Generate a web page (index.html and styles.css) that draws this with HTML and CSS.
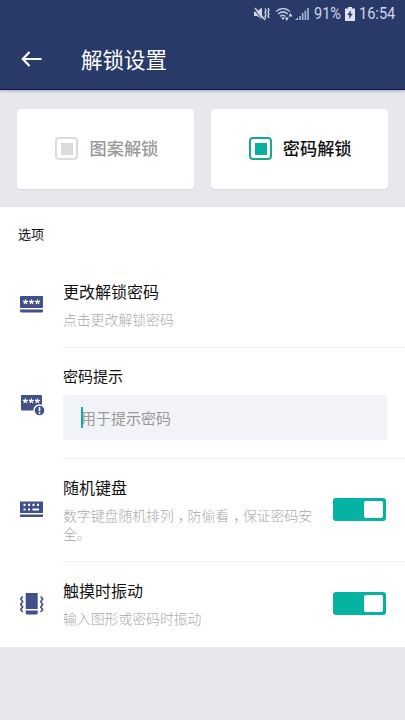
FILE: index.html
```html
<!DOCTYPE html>
<html lang="zh-CN">
<head>
<meta charset="utf-8">
<title>解锁设置</title>
<link rel="stylesheet" href="styles.css">
</head>
<body>
<header class="header">
  <div class="status">
    <svg class="mute" width="16" height="14" viewBox="0 0 16 14"><path d="M0 4.500h3L8 0.500v12L3 9H0z" fill="#ced5e6"/><path d="M0 2.500l9 11" stroke="#293a68" stroke-width="1"/><path d="M1 1l10 12" stroke="#ced5e6" stroke-width="1.400"/><path d="M11 1.500l1 2-1 2 1 2-1 2 1 2M14 1l1 2-1 2 1 2-1 2 1 2" fill="none" stroke="#ced5e6" stroke-width="1.400"/></svg>
    <svg class="wifi" width="18" height="15" viewBox="0 0 18 15"><g fill="none" stroke="#b9c7df" stroke-width="1.500"><path d="M1 4.500Q8 -1.600 15 4.500M3 7Q8 2.700 13 7M5.200 9.500Q8 7 10.500 9.500"/></g><path d="M6.500 11L8 9.800l1.500 1.200L8 13z" fill="#ced5e6"/><path d="M9.800 10.500h4L11.800 14zM13.500 9.500h4l-2-3.500z" fill="#ced5e6"/></svg>
    <svg class="signal" width="14" height="14" viewBox="0 0 14 14"><path d="M0 13l3-2.500V13z" fill="#b9c7df"/><path d="M5 13V9M7.700 13V6M10.400 13V3.500M13 13V1" stroke="#a4b4d2" stroke-width="1.700"/></svg>
    <span class="percent">91%</span>
    <svg class="battery" width="10" height="14" viewBox="0 0 10 14"><path d="M3 0h4v1.500h3V14H0V1.500h3z" fill="#dce2ef"/><path d="M6 3L2.200 8h2.200L4 12l3.800-5.200H5.500z" fill="#293a68"/></svg>
    <span class="clock">16:54</span>
  </div>
  <div class="toolbar">
    <svg class="back" width="21" height="16" viewBox="0 0 21 16"><path d="M8.500 1L1.800 8l6.700 7M2 8h18.500" fill="none" stroke="#fff" stroke-width="2.200"/></svg>
    <h1>解锁设置</h1>
  </div>
</header>
<section class="modes">
  <div class="card"><i class="box"></i><span>图案解锁</span></div>
  <div class="card active"><i class="box"></i><span>密码解锁</span></div>
</section>
<main class="options">
  <h2>选项</h2>
  <div class="row change">
    <div class="icon"><svg width="24" height="17" viewBox="0.5 0 24 17"><rect x=".5" width="23" height="12" rx="1" fill="#40508a"/><path d="M.5 13.500h23V15q0 1.500-1.500 1.500H2Q.5 16.500.5 15z" fill="#40508a"/><g id="stars" stroke="#fff" stroke-width="1.300"><path id="star" d="M6 3.400V6M3.500 5.200L6 6l2.500-.8M4.500 8.200L6 6l1.500 2.200"/><use href="#star" x="6"/><use href="#star" x="12"/></g></svg></div>
    <div class="body"><h3>更改解锁密码</h3><p>点击更改解锁密码</p></div>
  </div>
  <div class="row hint">
    <div class="icon"><svg width="25" height="22" viewBox="0 0 25 22"><rect x="1" y="1" width="21" height="15.500" rx="1" fill="#40508a"/><use href="#stars" x="-.7" y="1"/><circle cx="19.500" cy="16.500" r="5.500" fill="#40508a" stroke="#fff" stroke-width="1.400"/><path d="M19.500 13v4.200M19.500 18.300v1.600" stroke="#fff" stroke-width="1.600"/></svg></div>
    <div class="body"><h3>密码提示</h3><div class="field"><i class="caret"></i><span>用于提示密码</span></div></div>
  </div>
  <div class="row random">
    <div class="icon"><svg width="24" height="17" viewBox="0.5 0 24 17"><path d="M.5.500h23V12H.5zM.5 13.500h23V15q0 1-1 1h-21q-1 0-1-1z" fill="#40508a"/><path d="M4 3.800h2M8.500 3.800h2M13 3.800h2M17.500 3.800h2M4 8.500h2M8.500 8.500h2M13 8.500h6.500" stroke="#fff" stroke-width="2.200"/></svg></div>
    <div class="body"><h3>随机键盘</h3><p>数字键盘随机排列<span class="comma">，</span>防偷看<span class="comma">，</span>保证密码安全。</p></div>
    <div class="switch"><i></i></div>
  </div>
  <div class="row vibrate">
    <div class="icon"><svg width="24" height="22" viewBox="0.3 0 24 22"><path d="M6 0h12v16H6zM6 17.500h12V20q0 1.500-1.500 1.500h-9Q6 21.500 6 20z" fill="#40508a"/><path d="M3 3.500L1 6l2 2.500L1 11.500l2 2.500-2 2.500L3 19M21 3.500L23 6l-2 2.500 2 3-2 2.500 2 2.500-2 2.500" fill="none" stroke="#40508a" stroke-width="1.600"/></svg></div>
    <div class="body"><h3>触摸时振动</h3><p>输入图形或密码时振动</p></div>
    <div class="switch"><i></i></div>
  </div>
</main>
</body>
</html>
```
FILE: styles.css
```css
* { box-sizing: border-box; }
body { margin: 0; height: 720px; overflow: hidden; background: #e7e8ed; font-family: "Noto Sans CJK SC", sans-serif; color: #111; }
h1, h2, h3, p { margin: 0; font-weight: 400; }
svg { display: block; flex: none; }
.header { height: 90px; background: #293a68; border-bottom: 1px solid #0c1556; box-shadow: 0 1px 3px rgba(40, 50, 110, .35); }
.status { display: flex; align-items: center; height: 28px; padding-left: 254px; font: 16px/28px Roboto, sans-serif; color: #ced5e6; }
.wifi { margin-left: 5px; }
.signal { margin-left: 2px; }
.percent { width: 28px; margin-left: 5px; white-space: nowrap; font-size: 16px; }
.percent, .clock { display: block; transform: scaleX(.91); transform-origin: left; }
.battery { margin-left: 3px; }
.clock { margin-left: 4px; }
.toolbar { display: flex; align-items: center; height: 61px; padding-left: 21px; }
.toolbar h1 { margin: 0 0 0 39px; color: #fff; font-size: 21.5px; line-height: 32px; }
.modes { display: flex; gap: 17px; height: 117px; padding: 18.5px 17px; }
.card { display: flex; align-items: center; flex: 1; padding-left: 38px; background: #fff; border-radius: 4px; box-shadow: 0 1px 1px #d5d7dc; font-size: 17.2px; line-height: 24px; font-weight: 500; color: #999; }
.card span { margin: -2px 0 0 11.5px; }
.active span { margin-left: 11px; }
.box { width: 23px; height: 23px; padding: 3.5px; border: 2px solid #dcdcdc; border-radius: 4px; background: #dcdcdc content-box; }
.active { padding-left: 37.5px; color: #111; }
.active .box { border-color: #1ba694; background-color: #06b29f; }
.options { height: 439.500px; background: #fff; padding-left: 18px; }
h2 { height: 59px; padding-top: 17px; font-size: 13px; line-height: 20px; }
.row { display: flex; }
.icon { width: 45px; flex: none; padding-left: 2px; }
.body { flex: 1; min-width: 0; }
.row h3 { font-size: 16px; line-height: 24px; }
.row p { width: 255px; margin-top: 7px; color: #a9a9a9; font-size: 13.85px; line-height: 18px; font-weight: 300; }
.change { height: 82px; }
.change .icon { padding-top: 30px; }
.change .body { padding-top: 13px; border-bottom: 1px solid #f0f0f0; }
.hint { height: 111px; }
.hint .icon { padding-top: 46px; }
.hint .body { padding-top: 17px; border-bottom: 1px solid #f0f0f0; }
.hint h3 { font-size: 15px; line-height: 22px; }
.field { display: flex; align-items: center; height: 45px; margin: 8px 18px 0 0; padding-left: 18px; border-radius: 2px; background: #f2f3f8; color: #999; font-size: 15px; line-height: 22px; }
.caret { width: 2px; height: 21px; margin-right: -2px; background: #08ae9d; }
.random { height: 103px; }
.random .icon { padding-top: 42px; }
.random .body { padding-top: 16px; border-bottom: 1px solid #f0f0f0; }
.comma { padding: 0 .2em 0 .3em; font-feature-settings: "halt"; }
.switch { flex: none; width: 72px; border-bottom: 1px solid #f0f0f0; }
.random .switch { padding-top: 39px; }
.vibrate .switch { padding-top: 30px; border: 0; }
.switch i { display: flex; justify-content: flex-end; width: 53px; height: 23px; padding: 3px; border-radius: 3px; background: #06b3a2; }
.switch i::after { content: ""; width: 19px; height: 17px; border-radius: 2px; background: #fff; }
.vibrate .icon { padding-top: 31px; }
.vibrate .body { padding-top: 16px; }
```
